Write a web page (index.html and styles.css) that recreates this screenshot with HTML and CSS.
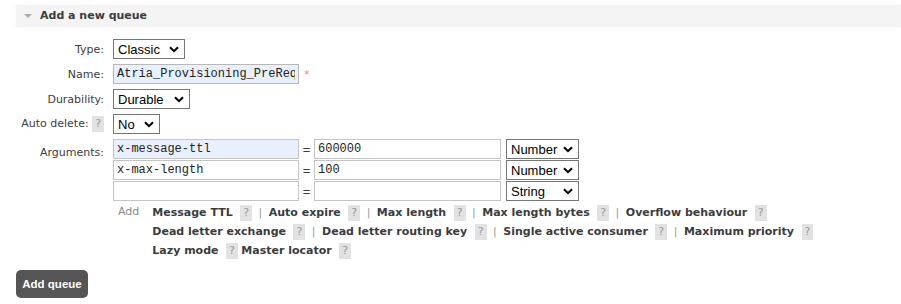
FILE: index.html
```html
<!DOCTYPE html>
<html lang="en">
<head>
  <meta charset="UTF-8">
  <title>Add a new queue</title>
  <link rel="stylesheet" href="styles.css">
</head>
<body>
  <div class="section">
    <h2 class="section-title"><span class="arrow"></span>Add a new queue</h2>
    <form class="queue-form">
      <label class="field-label">Type:</label>
      <div class="field">
        <span class="sel sel-type">
          <select><option>Classic</option><option>Quorum</option></select>
          <svg class="chev" width="10" height="7" viewBox="0 0 10 7"><path d="M1 1.2l4 4 4-4" fill="none" stroke="#000" stroke-width="2"/></svg>
        </span>
      </div>

      <label class="field-label">Name:</label>
      <div class="field field-row">
        <input type="text" class="text name-input" value="Atria_Provisioning_PreReq"><span class="mand">*</span>
      </div>

      <label class="field-label">Durability:</label>
      <div class="field">
        <span class="sel sel-durable">
          <select><option>Durable</option><option>Transient</option></select>
          <svg class="chev" width="10" height="7" viewBox="0 0 10 7"><path d="M1 1.2l4 4 4-4" fill="none" stroke="#000" stroke-width="2"/></svg>
        </span>
      </div>

      <label class="field-label">Auto delete: <span class="help">?</span></label>
      <div class="field">
        <span class="sel sel-no">
          <select><option>No</option><option>Yes</option></select>
          <svg class="chev" width="10" height="7" viewBox="0 0 10 7"><path d="M1 1.2l4 4 4-4" fill="none" stroke="#000" stroke-width="2"/></svg>
        </span>
      </div>

      <label class="field-label args-label">Arguments:</label>
      <div class="field">
        <div class="args">
          <div class="arg-row">
            <input type="text" class="text key key-filled" value="x-message-ttl">
            <span class="eq">=</span>
            <input type="text" class="text val" value="600000">
            <span class="sel sel-argtype">
              <select><option>Number</option><option>String</option><option>Boolean</option><option>List</option></select>
              <svg class="chev" width="10" height="7" viewBox="0 0 10 7"><path d="M1 1.2l4 4 4-4" fill="none" stroke="#000" stroke-width="2"/></svg>
            </span>
          </div>
          <div class="arg-row">
            <input type="text" class="text key" value="x-max-length">
            <span class="eq">=</span>
            <input type="text" class="text val" value="100">
            <span class="sel sel-argtype">
              <select><option>Number</option><option>String</option><option>Boolean</option><option>List</option></select>
              <svg class="chev" width="10" height="7" viewBox="0 0 10 7"><path d="M1 1.2l4 4 4-4" fill="none" stroke="#000" stroke-width="2"/></svg>
            </span>
          </div>
          <div class="arg-row">
            <input type="text" class="text key" value="">
            <span class="eq">=</span>
            <input type="text" class="text val" value="">
            <span class="sel sel-argtype">
              <select><option>String</option><option>Number</option><option>Boolean</option><option>List</option></select>
              <svg class="chev" width="10" height="7" viewBox="0 0 10 7"><path d="M1 1.2l4 4 4-4" fill="none" stroke="#000" stroke-width="2"/></svg>
            </span>
          </div>
        </div>

        <div class="arg-links">
          <span class="add-label">Add</span>
          <div class="links">
            <span class="argument-link">Message TTL</span> <span class="help">?</span> <span class="sep">|</span>
            <span class="argument-link">Auto expire</span> <span class="help">?</span> <span class="sep">|</span>
            <span class="argument-link">Max length</span> <span class="help">?</span> <span class="sep">|</span>
            <span class="argument-link">Max length bytes</span> <span class="help">?</span> <span class="sep">|</span>
            <span class="argument-link">Overflow behaviour</span> <span class="help">?</span><br>
            <span class="argument-link">Dead letter exchange</span> <span class="help">?</span> <span class="sep">|</span>
            <span class="argument-link">Dead letter routing key</span> <span class="help">?</span> <span class="sep">|</span>
            <span class="argument-link">Single active consumer</span> <span class="help">?</span> <span class="sep">|</span>
            <span class="argument-link">Maximum priority</span> <span class="help">?</span><br>
            <span class="argument-link">Lazy mode</span> <span class="help">?</span>
            <span class="argument-link">Master locator</span> <span class="help">?</span>
          </div>
        </div>
      </div>
    </form>
    <button type="button" class="submit">Add queue</button>
  </div>
</body>
</html>
```

FILE: styles.css
```css
body {
  margin: 0;
  font-family: "DejaVu Sans", Verdana, sans-serif;
  font-size: 11px;
  color: #3c3c3c;
  background: #fff;
}
.section-title {
  margin: 5px 0 0 16px;
  height: 22px;
  line-height: 22px;
  padding-left: 24px;
  font-size: 11px;
  font-weight: bold;
  color: #3c3c3c;
  background: #f4f4f4;
  box-shadow: 0 0 4px #f4f4f4;
  position: relative;
}
.arrow {
  position: absolute;
  left: 8px;
  top: 9px;
  width: 0;
  height: 0;
  border-left: 4px solid transparent;
  border-right: 4px solid transparent;
  border-top: 4px solid #aaa;
}
.queue-form {
  display: grid;
  grid-template-columns: 104px auto;
  column-gap: 9px;
  row-gap: 5px;
  align-items: center;
  margin-top: 12px;
}
.field-label {
  text-align: right;
  white-space: nowrap;
}
.args-label {
  align-self: start;
  padding-top: 7px;
}
.field {
  display: flex;
  flex-direction: column;
  align-items: flex-start;
}
.field-row {
  flex-direction: row;
  align-items: center;
}
.mand {
  color: #f88;
  padding: 0 5px;
}
.sel {
  position: relative;
  display: inline-block;
  height: 20px;
}
.sel select {
  appearance: none;
  -webkit-appearance: none;
  display: block;
  font-family: "Liberation Sans", Arial, sans-serif;
  font-size: 13px;
  color: #000;
  background: #fff;
  border: 1px solid #767676;
  border-radius: 0;
  height: 20px;
  padding: 0 0 0 4px;
  margin: 0;
  outline: none;
}
.sel .chev {
  position: absolute;
  right: 6px;
  top: 7px;
  pointer-events: none;
}
.sel-type select { width: 72px; }
.sel-durable select { width: 77px; }
.sel-no select { width: 47px; }
.sel-argtype select { width: 73px; }
.text {
  font-family: "Liberation Mono", "Courier New", monospace;
  font-size: 12px;
  color: #222;
  height: 20px;
  box-sizing: border-box;
  border: 1px solid #c4c4c4;
  padding: 0 3px;
  margin: 0;
  background: #fff;
  outline: none;
}
.name-input {
  width: 186px;
  background: #e8f0fe;
  border-color: #b8b8b8;
}
.args {
  display: flex;
  flex-direction: column;
  gap: 1px;
}
.arg-row {
  display: flex;
  align-items: center;
  height: 20px;
}
.key {
  width: 186px;
}
.key-filled {
  background: #e8f0fe;
}
.eq {
  width: 15px;
  text-align: center;
  font-family: "Liberation Sans", Arial, sans-serif;
  font-size: 13px;
}
.val {
  width: 187px;
  margin-right: 5px;
}
.arg-links {
  display: flex;
  margin-top: 2px;
}
.add-label {
  color: #888;
  padding: 0 13px 0 5px;
  line-height: 18px;
}
.links {
  line-height: 19px;
}
.argument-link {
  font-weight: bold;
  color: #3c3c3c;
  margin-right: 4px;
}
.help {
  display: inline-block;
  background: #e2e2e2;
  color: #999;
  padding: 0 3px;
  line-height: 16px;
  font-weight: normal;
}
.sep {
  color: #999;
  margin: 0 3px;
}
.submit {
  display: block;
  margin: 10px 0 0 16px;
  height: 28px;
  width: 72px;
  padding: 0;
  border: none;
  border-radius: 5px;
  background: #555;
  color: #fff;
  font-family: "Liberation Sans", Arial, sans-serif;
  font-size: 11.5px;
  font-weight: bold;
}
```
